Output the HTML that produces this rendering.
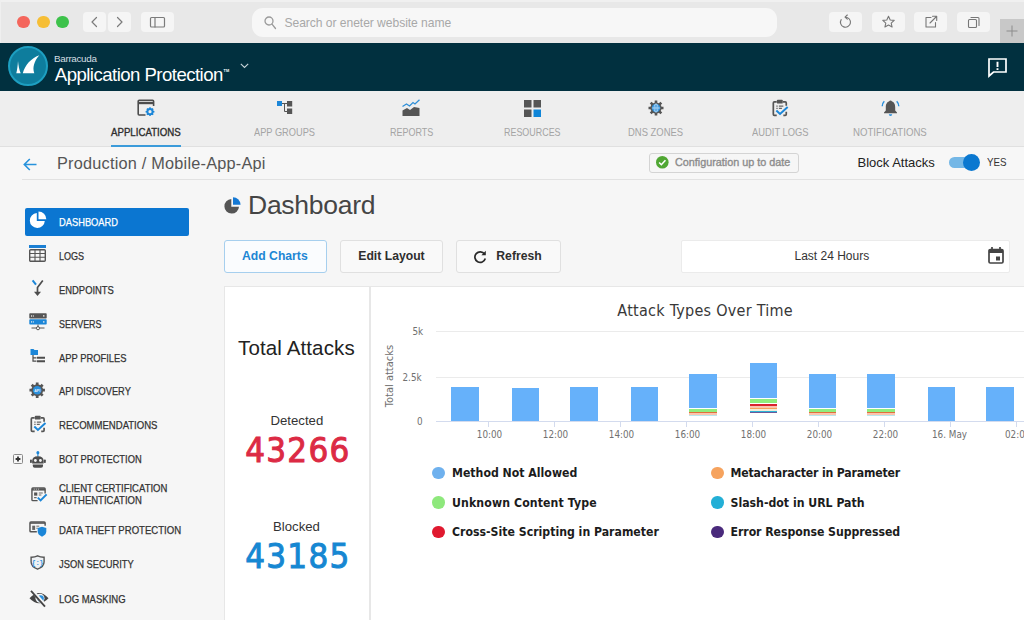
<!DOCTYPE html>
<html><head><meta charset="utf-8">
<title>Barracuda Application Protection</title>
<style>
*{box-sizing:border-box;margin:0;padding:0}
html,body{width:1024px;height:620px;overflow:hidden;background:#f6f6f6;font-family:"Liberation Sans",sans-serif;}
#root{position:relative;width:1024px;height:620px;overflow:hidden;background:#f6f6f6}
.abs{position:absolute}
svg{position:absolute;overflow:visible}
#chrome{left:0;top:0;width:1024px;height:43px;background:#e8e8e8}
.dot{position:absolute;top:15.500px;width:12.500px;height:12.500px;border-radius:50%}
.cbtn{position:absolute;background:#f5f5f5;border-radius:4px;top:11.800px;height:19.800px}
#search{left:252px;top:7.500px;width:525px;height:29px;border-radius:11px;background:#f7f7f7}
#search span{position:absolute;left:32.500px;top:8px;font-size:12.1px;color:#a8a8a8;white-space:nowrap;letter-spacing:-0.05px}
#hdr{left:0;top:43px;width:1024px;height:48px;background:#01303f}
#nav{left:0;top:91px;width:1024px;height:56px;background:#eeeeee;border-bottom:1px solid #e0e0e0}
.navi{position:absolute;top:35.800px;font-size:10.2px;color:#a4a4a4;white-space:nowrap;line-height:12px;transform-origin:0 50%}
#crumb{left:0;top:148px;width:1024px;height:32px;background:#f7f7f7}
.side{position:absolute;left:58.8px;font-size:10.5px;color:#333;white-space:nowrap;line-height:12px;-webkit-text-stroke:0.25px #333;transform-origin:0 50%;transform:scaleX(0.9)}
.btn{position:absolute;top:240px;height:33px;border:1px solid #e0e0e0;border-radius:3px;background:#f9f9f9;font-size:12.2px;font-weight:bold;color:#2e2e2e;white-space:nowrap}
.btn span{position:absolute;top:8px;line-height:15px}
.card{position:absolute;background:#fff;border:1px solid #e7e7e7}
.lg{position:absolute;font-family:"DejaVu Sans Condensed","DejaVu Sans",sans-serif;font-stretch:condensed;font-weight:bold;font-size:12.2px;color:#1c1c1c;white-space:nowrap;line-height:15px}
.ld{position:absolute;width:12.500px;height:12.500px;border-radius:50%}
.ax{position:absolute;font-family:"DejaVu Sans Condensed","DejaVu Sans",sans-serif;font-stretch:condensed;font-size:9.8px;color:#707070;white-space:nowrap;line-height:12px}
.xl{transform:translateX(-50%);top:429px}
.bar{position:absolute;background:#66b1fa}
.seg{position:absolute}
.grid{position:absolute;left:436px;width:588px;height:1px;background:#ebebeb}
.num{position:absolute;font-family:"DejaVu Sans Condensed","DejaVu Sans",sans-serif;font-stretch:condensed;font-size:34.6px;letter-spacing:1.25px;line-height:40px;white-space:nowrap}
</style></head><body>
<div id="root">

<!-- ===== browser chrome ===== -->
<div id="chrome" class="abs">
  <div class="abs" style="left:0;top:0;width:1024px;height:1.500px;background:#f0f0f0"></div>
  <div class="abs" style="left:0;top:0;width:1px;height:43px;background:#efefef"></div>
  <div class="dot" style="left:17px;background:#f4665c"></div>
  <div class="dot" style="left:37px;background:#f6be35"></div>
  <div class="dot" style="left:56.300px;background:#3dc24b"></div>
  <div class="cbtn" style="left:83px;width:23px"></div>
  <div class="cbtn" style="left:108px;width:23px"></div>
  <div class="cbtn" style="left:141px;width:33px"></div>
  <svg style="left:83px;top:12px" width="91" height="20" viewBox="0 0 91 20" fill="none" stroke="#7b7b7b" stroke-width="1.2" stroke-linecap="round" stroke-linejoin="round">
    <path d="M13.5 5.5 L9 10 L13.5 14.5"/>
    <path d="M34.5 5.5 L39 10 L34.5 14.5"/>
    <rect x="67.5" y="5.5" width="14" height="9.5" rx="1"/>
    <path d="M72 5.5 V15"/>
  </svg>
  <div id="search" class="abs"><span>Search or eneter website name</span>
    <svg style="left:12px;top:8px" width="14" height="14" viewBox="0 0 14 14" fill="none" stroke="#9a9a9a" stroke-width="1.3" stroke-linecap="round"><circle cx="5" cy="5" r="4"/><path d="M8 8.2 L11.5 12.5"/></svg>
  </div>
  <div class="cbtn" style="left:829px;width:33px"></div>
  <div class="cbtn" style="left:872px;width:33px"></div>
  <div class="cbtn" style="left:914px;width:33px"></div>
  <div class="cbtn" style="left:957px;width:33px"></div>
  <svg style="left:829px;top:12px" width="161" height="20" viewBox="0 0 161 20" fill="none" stroke="#777" stroke-width="1.1" stroke-linecap="round" stroke-linejoin="round">
    <!-- reload -->
    <path d="M16.5 5.2 A5 5 0 1 1 12.2 7.6"/>
    <path d="M18.3 3 L16 5.2 L18.3 7.2" />
    <!-- star -->
    <path d="M59.5 4.3 L61.2 8 L65.2 8.4 L62.2 11.1 L63.1 15 L59.5 13 L55.9 15 L56.8 11.1 L53.8 8.4 L57.8 8 Z"/>
    <!-- external -->
    <path d="M102 5.5 H97 V15 H106.500 V10.500"/>
    <path d="M101 11 L107.5 4.500 M103.500 4.300 H107.700 V8.500"/>
    <!-- tabs -->
    <rect x="139.500" y="7.500" width="8" height="8" rx="1"/>
    <path d="M142 5.500 H149 Q150 5.500 150 6.500 V13.500"/>
  </svg>
  <div class="abs" style="left:1000px;top:19px;width:24px;height:24px;background:#c8c8c8"></div>
  <svg style="left:1006px;top:25px" width="12" height="12" viewBox="0 0 12 12" stroke="#8c8c8c" stroke-width="1"><path d="M6 0.500 V11.500 M0.500 6 H11.500"/></svg>
</div>

<!-- ===== header ===== -->
<div id="hdr" class="abs">
  <div class="abs" style="left:8px;top:3.300px;width:40.200px;height:40.200px;border-radius:50%;background:#0e7d9d;border:2px solid #1d9fc1"></div>
  <svg style="left:8px;top:3.300px" width="40" height="40" viewBox="0 0 40 40" fill="#fff">
    <path d="M10 15 C9.700 20 9.100 24 8.300 27.300 L12.700 27.300 C11.200 24 10.400 19.500 10 15 Z"/>
    <path d="M31.300 9.300 C23 12.500 17 19 14.800 27.300 L26.300 27.300 C24.300 21.500 26 15.500 31.300 9.300 Z"/>
  </svg>
  <div class="abs" style="left:54px;top:10px;font-size:9.900px;color:#d5dfe3;letter-spacing:-0.330px;line-height:12px;white-space:nowrap">Barracuda</div>
  <div class="abs" style="left:54.800px;top:20.500px;font-size:18.600px;color:#fff;white-space:nowrap;letter-spacing:-0.540px;line-height:22px">Application Protection<span style="font-size:3.800px;letter-spacing:0;position:relative;top:-8.500px;left:0.800px;font-weight:bold">TM</span></div>
  <svg style="left:239.500px;top:20px" width="9" height="6" viewBox="0 0 9 6" fill="none" stroke="#c9d5da" stroke-width="1.100"><path d="M0.800 0.800 L4.500 4.500 L8.200 0.800"/></svg>
  <svg style="left:988px;top:14.500px" width="19" height="19" viewBox="0 0 19 19" fill="none" stroke="#fff" stroke-width="1.700" stroke-linejoin="miter"><path d="M1 1 H18 V14 H5.500 L1 18 Z"/><path d="M9.500 3.800 V9 M9.500 10.300 V12" stroke-width="1.900"/></svg>
</div>

<!-- ===== nav ===== -->
<div id="nav" class="abs">
  <div class="navi" style="left:111px;color:#2e2e2e;-webkit-text-stroke:0.350px #2e2e2e;transform:scaleX(0.950)">APPLICATIONS</div>
  <div class="navi" style="left:253.500px;transform:scaleX(0.908)">APP GROUPS</div>
  <div class="navi" style="left:389.800px;transform:scaleX(0.884)">REPORTS</div>
  <div class="navi" style="left:504px;transform:scaleX(0.876)">RESOURCES</div>
  <div class="navi" style="left:628.100px;transform:scaleX(0.926)">DNS ZONES</div>
  <div class="navi" style="left:751.900px;transform:scaleX(0.920)">AUDIT LOGS</div>
  <div class="navi" style="left:852.500px;transform:scaleX(0.947)">NOTIFICATIONS</div>
  <div class="abs" style="left:111px;top:54.300px;width:70px;height:2.400px;background:#3b9bda"></div>

  <!-- applications icon -->
  <svg style="left:137px;top:8px" width="19" height="18" viewBox="0 0 19 18" fill="none">
    <path d="M8.500 16 H2.200 Q1.200 16 1.200 15 V2.200 Q1.200 1.200 2.200 1.200 H15.600 Q16.600 1.200 16.600 2.200 V7" stroke="#4d4d4d" stroke-width="1.600"/>
    <path d="M1.200 4 H16.600" stroke="#4d4d4d" stroke-width="2.400"/>
    <circle cx="13" cy="12.700" r="2.600" stroke="#1b86d8" stroke-width="2"/>
    <g stroke="#1b86d8" stroke-width="1.500"><path d="M13 8.300 V9.800 M13 15.600 V17.100 M8.600 12.700 H10.100 M15.900 12.700 H17.400 M9.900 9.600 L10.900 10.600 M15.100 14.800 L16.100 15.800 M16.100 9.600 L15.100 10.600 M10.900 14.800 L9.900 15.800"/></g>
  </svg>
  <!-- app groups icon -->
  <svg style="left:277px;top:10px" width="16" height="14" viewBox="0 0 16 14" fill="none">
    <rect x="0" y="0" width="5" height="5" fill="#1b86d8"/>
    <rect x="10" y="0" width="5.200" height="5.500" fill="#555"/>
    <rect x="10" y="7.500" width="5.200" height="5.500" fill="#555"/>
    <path d="M5 2.500 H10 M7.500 2.500 V10.500 H10" stroke="#555" stroke-width="1"/>
  </svg>
  <!-- reports icon -->
  <svg style="left:402px;top:8px" width="18" height="18" viewBox="0 0 18 18" fill="none">
    <path d="M0.500 17 V11.500 L5 9 L8 11 L12 8 L17.500 9 V17 Z" fill="#555"/>
    <path d="M0.500 7.500 L4.500 5 L7.500 7 L11 3.500 L13 5 L17.500 0.800" stroke="#2f8fd8" stroke-width="1.300"/>
  </svg>
  <!-- resources icon -->
  <svg style="left:524px;top:8.500px" width="17" height="17" viewBox="0 0 17 17">
    <rect x="0" y="0" width="7.500" height="7.500" fill="#555"/><rect x="9.500" y="0" width="7.500" height="7.500" fill="#555"/>
    <rect x="0" y="9.500" width="7.500" height="7.500" fill="#555"/><rect x="9.500" y="9.500" width="7.500" height="7.500" fill="#0f85d8"/>
  </svg>
  <!-- dns zones icon -->
  <svg style="left:647.500px;top:8.500px" width="16" height="16" viewBox="0 0 16 16" fill="none">
    <g stroke="#555" stroke-width="2.600"><path d="M8 0.500 V15.500 M0.500 8 H15.500 M2.700 2.700 L13.300 13.300 M13.300 2.700 L2.700 13.300"/></g>
    <circle cx="8" cy="8" r="5.600" fill="#555"/>
    <circle cx="8" cy="8" r="4.200" fill="#2a8fdc"/>
    <g stroke="#e8f2fb" stroke-width="0.600"><path d="M3.800 8 H12.200 M8 3.800 V12.200"/><ellipse cx="8" cy="8" rx="2" ry="4.200"/></g>
  </svg>
  <!-- audit logs icon -->
  <svg style="left:772px;top:8.300px" width="17" height="18" viewBox="0 0 18 19" fill="none" preserveAspectRatio="none">
    <path d="M5 17.200 H2.500 Q1.400 17.200 1.400 16.100 V4.200 Q1.400 3.100 2.500 3.100 H5 M11.500 3.100 H14 Q15.100 3.100 15.100 4.200 V7" stroke="#555" stroke-width="1.800"/>
    <path d="M15.100 13.500 V16.100 Q15.100 17.200 14 17.200 H12" stroke="#555" stroke-width="1.800"/>
    <rect x="5.200" y="0.800" width="6.200" height="4" rx="0.900" fill="#555"/>
    <path d="M4.600 7.500 H6 M7.300 7.500 H12 M4.600 10 H6 M7.300 10 H10.500" stroke="#666" stroke-width="1.300"/>
    <path d="M4.600 12.100 L8.500 15.700 L16.600 8.500" stroke="#1b86d8" stroke-width="2.100"/>
  </svg>
  <!-- notifications icon -->
  <svg style="left:881px;top:9px" width="19" height="17" viewBox="0 0 19 17" fill="none">
    <path d="M9.500 1 C6 1.500 4.800 4 4.800 7.500 V10.500 L3 12.500 V13.300 H16 V12.500 L14.200 10.500 V7.500 C14.200 4 13 1.500 9.500 1 Z" fill="#555"/>
    <circle cx="9.500" cy="1.700" r="1.200" fill="#555"/>
    <path d="M7.800 14.300 A1.700 1.700 0 0 0 11.200 14.300 Z" fill="#2a8fdc"/>
    <path d="M3.300 1.200 C1.800 2.700 1.200 4.500 1.200 6.200 M15.700 1.200 C17.200 2.700 17.800 4.500 17.800 6.200" stroke="#2a8fdc" stroke-width="1.400"/>
  </svg>
</div>

<!-- ===== breadcrumb ===== -->
<div class="abs" style="left:0;top:147px;width:1024px;height:1px;background:#f7f7f7"></div>
<div id="crumb" class="abs">
  <svg style="left:22.500px;top:10px" width="14" height="13" viewBox="0 0 14 13" fill="none" stroke="#2792dc" stroke-width="1.600"><path d="M13.500 6.500 H1.800 M6.800 1 L1.300 6.500 L6.800 12"/></svg>
  <div class="abs" style="left:57px;top:6px;font-size:16.300px;color:#555;white-space:nowrap;letter-spacing:0.220px;line-height:19px">Production / Mobile-App-Api</div>
  <div class="abs" style="left:649px;top:5.300px;width:149.500px;height:19.700px;border:1px solid #d4d4d4;border-radius:3px;background:#f6f6f6"></div>
  <svg style="left:655.600px;top:8.300px" width="12.600" height="12.600" viewBox="0 0 12 12"><circle cx="6" cy="6" r="6" fill="#50a733"/><path d="M3 6.200 L5.100 8.300 L9 4.100" fill="none" stroke="#fff" stroke-width="1.500"/></svg>
  <div class="abs" style="left:675.300px;top:8.300px;font-size:11px;color:#8c8c8c;-webkit-text-stroke:0.350px #8c8c8c;white-space:nowrap;line-height:13px;transform-origin:0 50%;transform:scaleX(0.981)">Configuration up to date</div>
  <div class="abs" style="left:857.500px;top:6.600px;font-size:13px;color:#222;white-space:nowrap;line-height:15px">Block Attacks</div>
  <div class="abs" style="left:949px;top:8.900px;width:29px;height:11.600px;border-radius:6px;background:#74b7e6"></div>
  <div class="abs" style="left:963.200px;top:6px;width:17.200px;height:17.200px;border-radius:50%;background:#0b78d0"></div>
  <div class="abs" style="left:987px;top:8.300px;font-size:10.500px;color:#333;line-height:12px;transform-origin:0 50%;transform:scaleX(0.930)">YES</div>
</div>
<div class="abs" style="left:22px;top:179px;width:1002px;height:1px;background:#e2e2e2"></div>

<!-- ===== sidebar ===== -->
<div class="abs" style="left:25.300px;top:208.200px;width:163.800px;height:27.500px;background:#0b76d1;border-radius:2px"></div>
<div class="side" style="top:215.500px;color:#fff;-webkit-text-stroke:0.250px #fff;transform:scaleX(0.887)">DASHBOARD</div>
<div class="side" style="top:249.500px;transform:scaleX(0.860)">LOGS</div>
<div class="side" style="top:283.500px;transform:scaleX(0.896)">ENDPOINTS</div>
<div class="side" style="top:317.500px;transform:scaleX(0.850)">SERVERS</div>
<div class="side" style="top:351.500px;transform:scaleX(0.892)">APP PROFILES</div>
<div class="side" style="top:385.000px;transform:scaleX(0.881)">API DISCOVERY</div>
<div class="side" style="top:419.000px;transform:scaleX(0.909)">RECOMMENDATIONS</div>
<div class="side" style="top:453.000px;transform:scaleX(0.887)">BOT PROTECTION</div>
<div class="side" style="top:482px;line-height:12px;transform:scaleX(0.906)">CLIENT CERTIFICATION<br>AUTHENTICATION</div>
<div class="side" style="top:524.000px;transform:scaleX(0.911)">DATA THEFT PROTECTION</div>
<div class="side" style="top:558.000px;transform:scaleX(0.889)">JSON SECURITY</div>
<div class="side" style="top:593.000px;transform:scaleX(0.905)">LOG MASKING</div>

<!-- sidebar icons -->
<!-- dashboard pie -->
<svg style="left:29px;top:211px" width="18" height="18" viewBox="0 0 18 18" fill="#fff">
  <path d="M7.800 2 A7.500 7.500 0 1 0 15.800 10 H7.800 Z"/>
  <path d="M9.500 0.500 A7.800 7.800 0 0 1 17.300 8.300 H9.500 Z"/>
</svg>
<!-- logs table -->
<svg style="left:29px;top:245px" width="17" height="17" viewBox="0 0 17 17" fill="none">
  <rect x="0" y="0" width="17" height="3" fill="#1b7fd3"/>
  <rect x="0.700" y="4.700" width="15.600" height="11.600" rx="1" stroke="#555" stroke-width="1.400"/>
  <path d="M0.700 8.500 H16.300 M0.700 12.300 H16.300 M6 4.700 V16.300 M11 4.700 V16.300" stroke="#555" stroke-width="1.100"/>
</svg>
<!-- endpoints -->
<svg style="left:31px;top:279px" width="13" height="18" viewBox="0 0 13 18" fill="none">
  <path d="M6.500 14 V8.500 L11.800 1.500" stroke="#4d4d4d" stroke-width="1.700"/>
  <path d="M1.600 1.300 L5 5.600" stroke="#1b86d8" stroke-width="2"/>
  <path d="M3 12.800 L6.500 17 L10 12.800 Z" fill="#4d4d4d"/>
</svg>
<!-- servers -->
<svg style="left:29px;top:313px" width="18" height="18" viewBox="0 0 18 18" fill="none">
  <rect x="0.300" y="0.300" width="17.400" height="5.200" rx="0.800" fill="#555"/>
  <rect x="0.300" y="6.300" width="17.400" height="5.200" rx="0.800" fill="#1b86d8"/>
  <g fill="#e8e8e8"><rect x="2" y="2.300" width="1" height="1.400"/><rect x="3.800" y="2.300" width="1" height="1.400"/><circle cx="14.800" cy="2.900" r="0.800"/><rect x="2" y="8.200" width="1" height="1.400"/><rect x="3.800" y="8.200" width="1" height="1.400"/><circle cx="14.800" cy="8.900" r="0.800"/></g>
  <path d="M9 11.500 V14 M2.500 15 H7 M11 15 H15.500" stroke="#555" stroke-width="1"/>
  <circle cx="9" cy="15.200" r="1.600" stroke="#555" stroke-width="1"/>
</svg>
<!-- app profiles -->
<svg style="left:30px;top:348px" width="16" height="15" viewBox="0 0 16 15" fill="none">
  <path d="M0.500 1 H3.500 L4.500 2 H8 V7 H0.500 Z" fill="#1b86d8"/>
  <path d="M3 7 V13.200 H6.500 M3 9.800 H6.500" stroke="#4d4d4d" stroke-width="1.200"/>
  <path d="M7 9.800 H15 M7 13.200 H15" stroke="#4d4d4d" stroke-width="1.900"/>
</svg>
<!-- api discovery -->
<svg style="left:29.300px;top:382.100px" width="16.400" height="16.400" viewBox="0 0 18 18" fill="none">
  <g stroke="#555" stroke-width="3"><path d="M9 0.500 V17.500 M0.500 9 H17.500 M3 3 L15 15 M15 3 L3 15"/></g>
  <circle cx="9" cy="9" r="6.500" fill="#555"/>
  <circle cx="9" cy="9" r="4.700" fill="#2a8fdc"/>
  <text x="9" y="10.600" font-family="Liberation Sans, sans-serif" font-size="4" font-weight="bold" fill="#e4f0fb" text-anchor="middle">API</text>
</svg>
<!-- recommendations -->
<svg style="left:29.800px;top:415.300px" width="16.800" height="18" viewBox="0 0 18 19" fill="none" preserveAspectRatio="none">
  <path d="M5 17.200 H2.500 Q1.400 17.200 1.400 16.100 V4.200 Q1.400 3.100 2.500 3.100 H5 M11.500 3.100 H14 Q15.100 3.100 15.100 4.200 V7" stroke="#555" stroke-width="1.800"/>
  <path d="M15.100 13.500 V16.100 Q15.100 17.200 14 17.200 H12" stroke="#555" stroke-width="1.800"/>
  <rect x="5.200" y="0.800" width="6.200" height="4" rx="0.900" fill="#555"/>
  <path d="M4.600 7.500 H6 M7.300 7.500 H12 M4.600 10 H6 M7.300 10 H10.500" stroke="#666" stroke-width="1.300"/>
  <path d="M4.600 12.100 L8.500 15.700 L16.600 8.500" stroke="#1b86d8" stroke-width="2.100"/>
</svg>
<!-- bot protection expand -->
<svg style="left:12.500px;top:454px" width="10" height="10" viewBox="0 0 10 10" fill="none"><rect x="0.500" y="0.500" width="9" height="9" rx="1" stroke="#8a8a8a" stroke-width="1"/><path d="M5 2.600 V7.400 M2.600 5 H7.400" stroke="#333" stroke-width="1.800"/></svg>
<!-- bot -->
<svg style="left:30px;top:450.800px" width="15.800" height="17.500" viewBox="0 0 17 18" fill="none" preserveAspectRatio="none">
  <circle cx="8.500" cy="1.700" r="1.600" fill="#1b86d8"/>
  <path d="M8.500 3 V6" stroke="#1b86d8" stroke-width="1.200"/>
  <path d="M2.300 12.800 V10.500 Q2.300 5.500 8.500 5.500 Q14.700 5.500 14.700 10.500 V12.800 Z" fill="#4d4d4d"/>
  <rect x="0" y="8.800" width="2" height="3.500" rx="0.800" fill="#4d4d4d"/><rect x="15" y="8.800" width="2" height="3.500" rx="0.800" fill="#4d4d4d"/>
  <circle cx="5.800" cy="9.700" r="1.500" fill="#f4f4f4"/><circle cx="11.200" cy="9.700" r="1.500" fill="#f4f4f4"/>
  <path d="M3 14 H14 V15.500 Q14 17.300 12 17.300 H5 Q3 17.300 3 15.500 Z" fill="#4d4d4d"/>
</svg>
<!-- client cert -->
<svg style="left:30.800px;top:486.500px" width="16" height="16" viewBox="0 0 17 17" fill="none" preserveAspectRatio="none">
  <path d="M7 14.500 H2 Q1 14.500 1 13.500 V2 Q1 1 2 1 H14 Q15 1 15 2 V7" stroke="#555" stroke-width="1.500"/>
  <path d="M1 2.600 H15" stroke="#555" stroke-width="2.400"/>
  <path d="M3 2.300 H4 M5.200 2.300 H6.200 M7.400 2.300 H8.400" stroke="#eee" stroke-width="0.800"/>
  <rect x="3.300" y="5.800" width="3.400" height="3.400" fill="#555"/>
  <path d="M8.300 6.300 H12.500 M8.300 8.500 H11 M3.300 11.300 H6" stroke="#666" stroke-width="1.100"/>
  <path d="M7.200 11.300 L10.200 14.300 L16.600 7.800" stroke="#1b86d8" stroke-width="2.100"/>
</svg>
<!-- data theft -->
<svg style="left:29.200px;top:520.800px" width="17.600" height="16" viewBox="0 0 18 17" fill="none" preserveAspectRatio="none">
  <path d="M8 11.500 H2 Q1 11.500 1 10.500 V2 Q1 1 2 1 H15.500 Q16.500 1 16.500 2 V5" stroke="#555" stroke-width="1.500"/>
  <path d="M1 2.200 H16.500" stroke="#555" stroke-width="1.600"/>
  <rect x="3.300" y="5" width="3" height="4.500" fill="#666"/>
  <path d="M7.500 5.500 H10.500 M7.500 7.700 H9" stroke="#666" stroke-width="1"/>
  <path d="M13.300 6.200 L17.700 7.500 V11 Q17.700 14.800 13.300 16.700 Q8.900 14.800 8.900 11 V7.500 Z" fill="#1b86d8"/>
</svg>
<!-- json security -->
<svg style="left:30.300px;top:555px" width="15.200" height="15" viewBox="0 0 15 15" fill="none">
  <path d="M7.500 0.900 Q10.500 2.400 14 2.300 V6.800 Q14 11.800 7.500 14.200 Q1 11.800 1 6.800 V2.300 Q4.500 2.400 7.500 0.900 Z" stroke="#555" stroke-width="1.400" fill="#eef1f4"/>
  <text x="7.500" y="9.600" font-family="Liberation Mono, monospace" font-size="6.500" font-weight="bold" fill="#2a8fdc" text-anchor="middle">{:}</text>
</svg>
<!-- log masking -->
<svg style="left:29.300px;top:589.800px" width="20" height="17" viewBox="0 0 20 17" fill="none">
  <path d="M0.500 8.300 Q10 -2.300 19.500 8.300 Q10 18.300 0.500 8.300 Z" fill="#454545"/>
  <circle cx="11" cy="8.300" r="4.500" fill="#f4f4f4"/>
  <circle cx="11.600" cy="8.500" r="3.200" fill="#2a8fdc"/>
  <path d="M3 0.500 L17 16.300" stroke="#f6f6f6" stroke-width="3.400"/>
  <path d="M2 0.800 L16 16.600" stroke="#454545" stroke-width="1.800"/>
</svg>

<!-- ===== title & toolbar ===== -->
<svg style="left:223.500px;top:196.500px" width="17" height="17" viewBox="0 0 17 17">
  <path d="M7.300 2 A7.300 7.300 0 1 0 15 9.700 H7.300 Z" fill="#555"/>
  <path d="M9 0.200 A7.600 7.600 0 0 1 16.600 7.800 H9 Z" fill="#1478d4"/>
</svg>
<div class="abs" style="left:248px;top:190.200px;font-size:26.500px;color:#454545;white-space:nowrap;letter-spacing:-0.260px;line-height:30px">Dashboard</div>
<div class="btn" style="left:224px;width:103px;color:#1d86d4;border-color:#a6cfee;background:#fafcfe"><span style="left:17px">Add Charts</span></div>
<div class="btn" style="left:340px;width:103px"><span style="left:17.300px">Edit Layout</span></div>
<div class="btn" style="left:456px;width:105px"><span style="left:39.300px">Refresh</span>
  <svg style="left:16.300px;top:9px" width="14" height="14" viewBox="0 0 14 14" fill="none" stroke="#2a2a2a" stroke-width="1.700"><path d="M11.500 4 A5.300 5.300 0 1 0 12.300 8.500"/><path d="M12.800 0.800 V5.200 H8.400 Z" fill="#2a2a2a" stroke="none"/></svg>
</div>
<div class="abs" style="left:681px;top:240px;width:329px;height:33px;background:#fff;border:1px solid #ebebeb;border-radius:2px"></div>
<div class="abs" style="left:794.500px;top:249px;font-size:12px;color:#333;white-space:nowrap;line-height:14px">Last 24 Hours</div>
<svg style="left:988px;top:246.500px" width="16" height="17" viewBox="0 0 16 17" fill="none">
  <rect x="1" y="2.500" width="14" height="13.500" rx="1.300" stroke="#444" stroke-width="1.700"/>
  <path d="M1 3 H15 V6 H1 Z" fill="#444"/>
  <path d="M4 0 V3 M12 0 V3" stroke="#444" stroke-width="1.700"/>
  <rect x="8" y="9.500" width="4" height="4" fill="#444"/>
</svg>

<!-- ===== cards ===== -->
<div class="card" style="left:224px;top:286px;width:146px;height:340px"></div>
<div class="card" style="left:370px;top:286px;width:660px;height:340px"></div>
<div class="abs" style="left:238px;top:336px;font-size:20.500px;color:#222;white-space:nowrap;letter-spacing:0.130px;line-height:24px">Total Attacks</div>
<div class="abs" style="left:270.500px;top:413px;font-size:13.200px;color:#333;line-height:15px;white-space:nowrap">Detected</div>
<div class="num" style="left:245.300px;top:430px;color:#dc2a44;-webkit-text-stroke:0.950px #dc2a44">43266</div>
<div class="abs" style="left:273px;top:519px;font-size:13.200px;color:#333;line-height:15px;white-space:nowrap">Blocked</div>
<div class="num" style="left:245.300px;top:536px;color:#1687d2;-webkit-text-stroke:0.950px #1687d2">43185</div>

<!-- ===== chart ===== -->
<div class="abs" style="left:617.300px;top:301.300px;font-family:'DejaVu Sans Condensed','DejaVu Sans',sans-serif;font-stretch:condensed;font-size:16px;letter-spacing:0.270px;color:#383838;white-space:nowrap;line-height:20px">Attack Types Over Time</div>
<div class="grid" style="top:331px"></div>
<div class="grid" style="top:377px"></div>
<div class="grid" style="top:421px;background:#d3dbee"></div>
<div class="ax" style="left:412.500px;top:325.500px">5k</div>
<div class="ax" style="left:402.500px;top:371.500px">2.5k</div>
<div class="ax" style="left:417px;top:415.500px">0</div>
<div class="ax" style="left:390px;top:376px;font-size:11px;transform:translate(-50%,-50%) rotate(-90deg)">Total attacks</div>

<div class="bar" style="left:451px;top:387px;width:27.500px;height:34px"></div>
<div class="bar" style="left:511.500px;top:388px;width:27.500px;height:33px"></div>
<div class="bar" style="left:570px;top:387px;width:27.500px;height:34px"></div>
<div class="bar" style="left:630.500px;top:387px;width:27.500px;height:34px"></div>
<div class="bar" style="left:689px;top:373.500px;width:28px;height:34.500px"></div>
<div class="bar" style="left:749.500px;top:363px;width:27.500px;height:35px"></div>
<div class="bar" style="left:808.500px;top:373.500px;width:27.500px;height:34.500px"></div>
<div class="bar" style="left:867px;top:373.500px;width:27.500px;height:34.500px"></div>
<div class="bar" style="left:927.500px;top:387px;width:27.500px;height:34px"></div>
<div class="bar" style="left:986px;top:387px;width:27.500px;height:34px"></div>
<!-- stacked segments (16:00, 20:00, 22:00) -->
<div class="seg" style="left:689px;top:409px;width:28px;height:2.600px;background:#90ed7d"></div>
<div class="seg" style="left:689px;top:411.800px;width:28px;height:0.900px;background:#e0703c"></div>
<div class="seg" style="left:689px;top:412.700px;width:28px;height:2.400px;background:#fbc4ad"></div>
<div class="seg" style="left:689px;top:415.100px;width:28px;height:1.400px;background:#b9e8ee"></div>
<div class="seg" style="left:808.500px;top:409px;width:27.500px;height:2.600px;background:#90ed7d"></div>
<div class="seg" style="left:808.500px;top:411.800px;width:27.500px;height:0.900px;background:#e0703c"></div>
<div class="seg" style="left:808.500px;top:412.700px;width:27.500px;height:2.400px;background:#fbc4ad"></div>
<div class="seg" style="left:808.500px;top:415.100px;width:27.500px;height:1.400px;background:#b9e8ee"></div>
<div class="seg" style="left:867px;top:409px;width:27.500px;height:2.600px;background:#90ed7d"></div>
<div class="seg" style="left:867px;top:411.800px;width:27.500px;height:0.900px;background:#e0703c"></div>
<div class="seg" style="left:867px;top:412.700px;width:27.500px;height:2.400px;background:#fbc4ad"></div>
<div class="seg" style="left:867px;top:415.100px;width:27.500px;height:1.400px;background:#b9e8ee"></div>
<!-- 18:00 -->
<div class="seg" style="left:749.500px;top:398.700px;width:27.500px;height:4.400px;background:#90ed7d"></div>
<div class="seg" style="left:749.500px;top:404.100px;width:27.500px;height:1.800px;background:#d9232e"></div>
<div class="seg" style="left:749.500px;top:406.100px;width:27.500px;height:1.700px;background:#fbc4ad"></div>
<div class="seg" style="left:749.500px;top:407.800px;width:27.500px;height:1.600px;background:#f7a35c"></div>
<div class="seg" style="left:749.500px;top:409.400px;width:27.500px;height:1.400px;background:#f3ecd9"></div>
<div class="seg" style="left:749.500px;top:410.800px;width:27.500px;height:1.300px;background:#2bb3d6"></div>
<div class="seg" style="left:749.500px;top:412.400px;width:27.500px;height:1px;background:#6a5a9a"></div>
<!-- ticks -->
<div class="seg" style="left:488px;top:421px;width:1px;height:6px;background:#d3dbee"></div>
<div class="seg" style="left:554px;top:421px;width:1px;height:6px;background:#d3dbee"></div>
<div class="seg" style="left:620px;top:421px;width:1px;height:6px;background:#d3dbee"></div>
<div class="seg" style="left:686px;top:421px;width:1px;height:6px;background:#d3dbee"></div>
<div class="seg" style="left:752px;top:421px;width:1px;height:6px;background:#d3dbee"></div>
<div class="seg" style="left:818px;top:421px;width:1px;height:6px;background:#d3dbee"></div>
<div class="seg" style="left:884px;top:421px;width:1px;height:6px;background:#d3dbee"></div>
<div class="seg" style="left:950px;top:421px;width:1px;height:6px;background:#d3dbee"></div>
<div class="seg" style="left:1016px;top:421px;width:1px;height:6px;background:#d3dbee"></div>
<!-- x labels -->
<div class="ax xl" style="left:489.500px">10:00</div>
<div class="ax xl" style="left:555.500px">12:00</div>
<div class="ax xl" style="left:621.500px">14:00</div>
<div class="ax xl" style="left:687.500px">16:00</div>
<div class="ax xl" style="left:753.500px">18:00</div>
<div class="ax xl" style="left:819.500px">20:00</div>
<div class="ax xl" style="left:885.500px">22:00</div>
<div class="ax xl" style="left:949.500px">16. May</div>
<div class="ax" style="left:1005px;top:429px">02:00</div>

<!-- legend -->
<div class="ld" style="left:432px;top:466.9px;background:#6fb1ee"></div><div class="lg" style="left:452px;top:466.3px">Method Not Allowed</div>
<div class="ld" style="left:432px;top:496.4px;background:#8ee87c"></div><div class="lg" style="left:452px;top:495.8px;letter-spacing:0.110px">Unknown Content Type</div>
<div class="ld" style="left:432px;top:525.9px;background:#e0192f"></div><div class="lg" style="left:452px;top:525.3px">Cross-Site Scripting in Parameter</div>
<div class="ld" style="left:711px;top:466.9px;background:#f6a35e"></div><div class="lg" style="left:730.500px;top:466.3px;letter-spacing:-0.180px">Metacharacter in Parameter</div>
<div class="ld" style="left:711px;top:496.4px;background:#23afd6"></div><div class="lg" style="left:730.500px;top:495.8px">Slash-dot in URL Path</div>
<div class="ld" style="left:711px;top:525.9px;background:#4a2a7c"></div><div class="lg" style="left:730.500px;top:525.3px;letter-spacing:-0.060px">Error Response Suppressed</div>

</div>
</body></html>
